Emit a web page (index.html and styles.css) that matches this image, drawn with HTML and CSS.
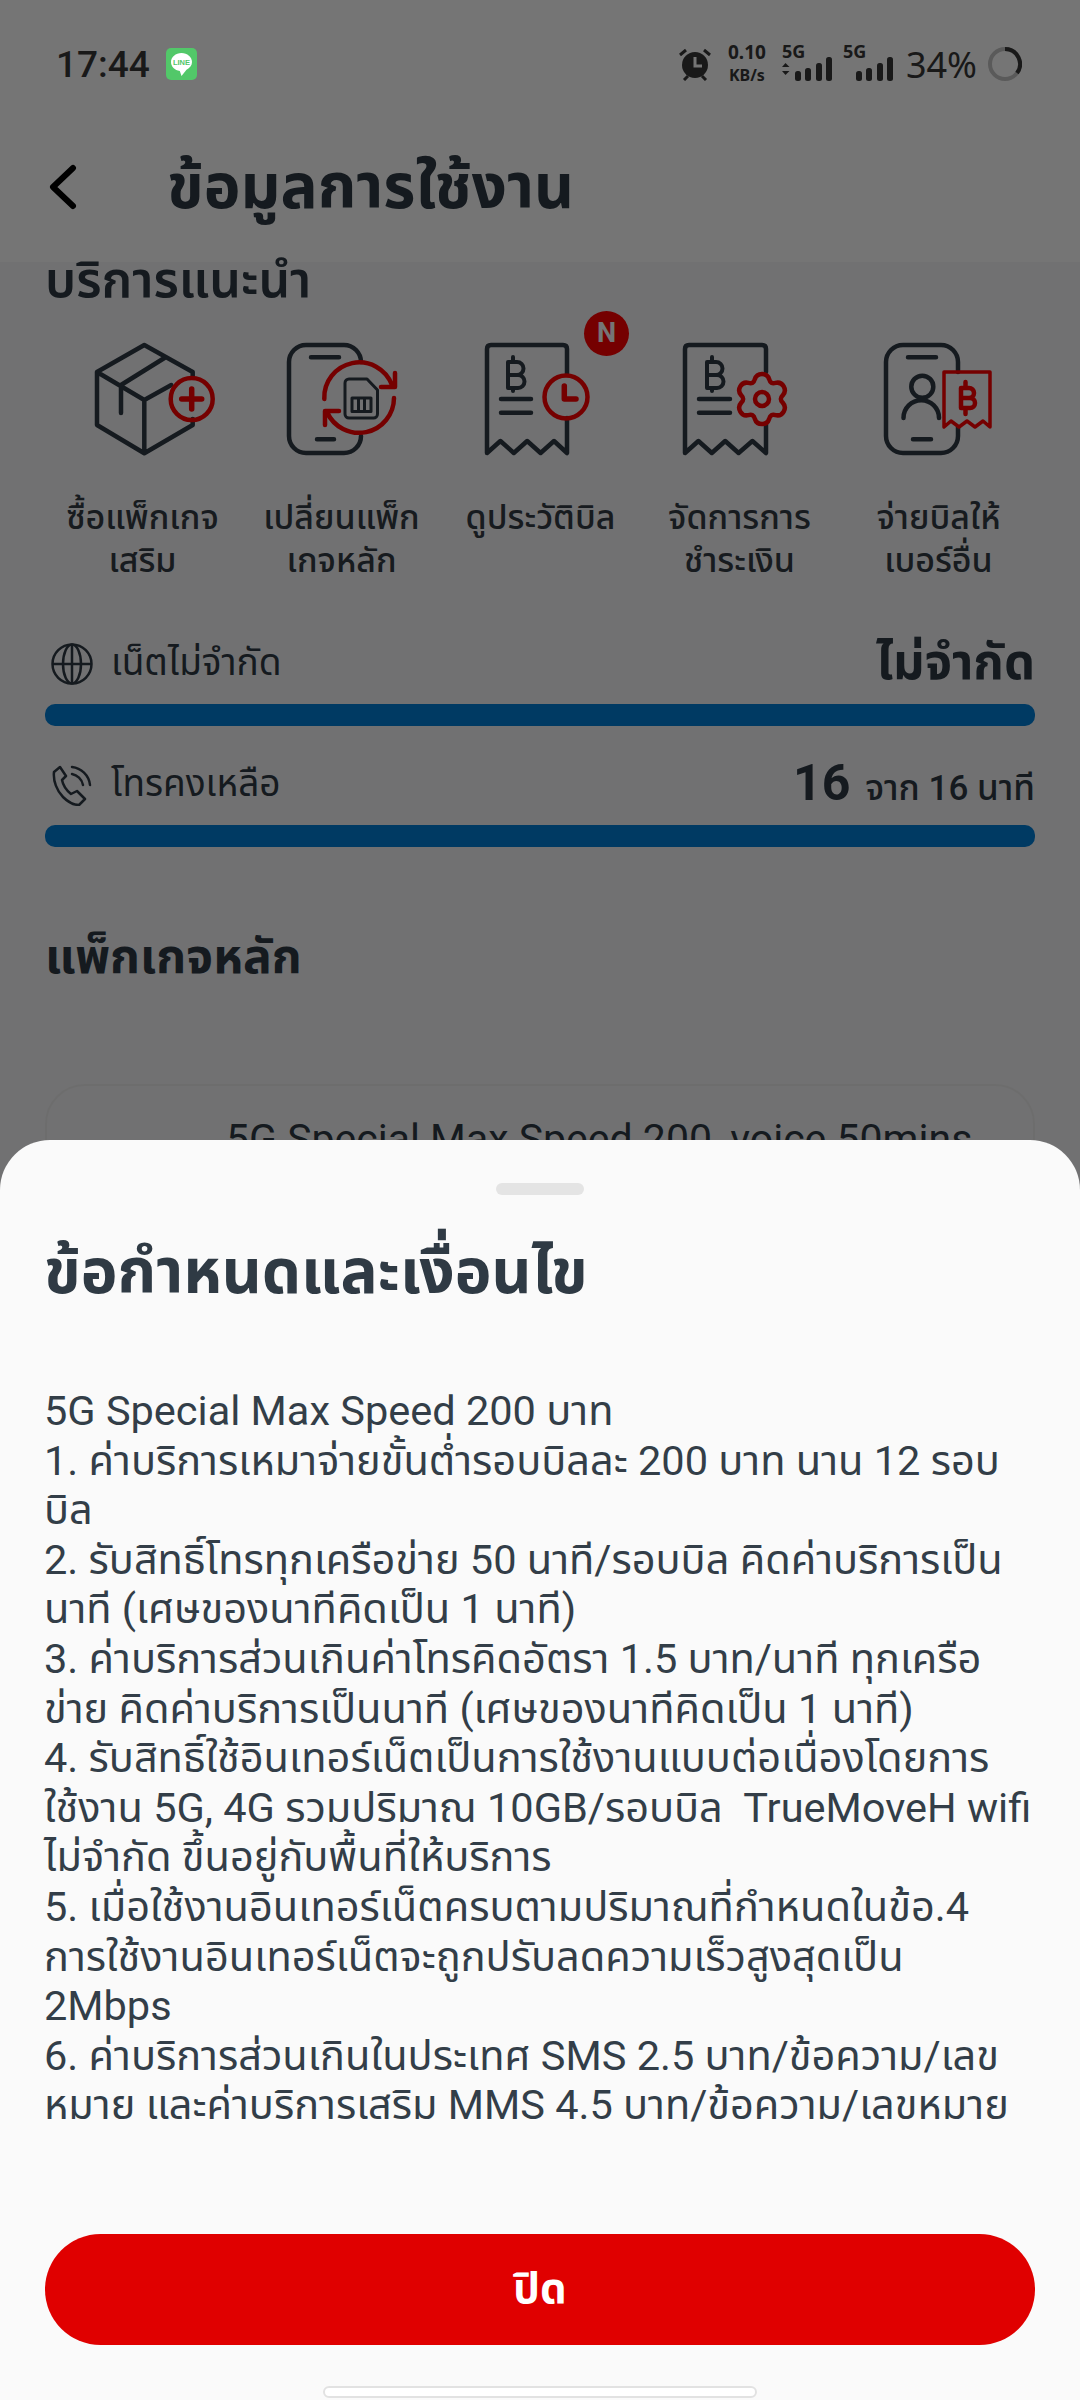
FILE: index.html
```html
<!DOCTYPE html>
<html lang="th">
<head>
<meta charset="UTF-8">
<meta name="viewport" content="width=device-width, initial-scale=1.0">
<title>ข้อมูลการใช้งาน</title>
<link rel="stylesheet" href="styles.css">
</head>
<body>

<div class="screen">
    <!-- status bar -->
    <div class="status">
        <span class="time">17:44</span>
        <svg class="line-app" viewBox="0 0 31 32">
            <rect width="31" height="32" rx="5" fill="#52c869"/>
            <path d="M15.500 5C9.700 5 5 9 5 14c0 4.600 3.800 8.300 8.800 8.900L15.500 28l5-6.300C23.800 20.200 26 17.300 26 14c0-5-4.700-9-10.500-9z" fill="#fff"/>
            <text class="line-word" x="15.500" y="17" text-anchor="middle">LINE</text>
        </svg>
        <div class="status-right">
            <svg class="alarm" viewBox="0 0 34 34">
                <circle cx="17" cy="18" r="13" fill="#383838"/>
                <path d="M2 8l6-5M32 8l-6-5M6 33l4-4M28 33l-4-4" stroke="#383838" stroke-width="3"/>
                <path d="M17 10v9h7" stroke="#fff" stroke-width="3" fill="none"/>
            </svg>
            <div class="speed"><b>0.10</b><span>KB/s</span></div>
            <div class="sim">
                <span class="sim-label">5G</span>
                <svg class="signal" viewBox="0 0 50 24">
                    <path d="M3.500 6l4 4H0zM3.500 18l4-4H0z" fill="#383838"/>
                    <rect x="13" y="14" width="6" height="10" rx="2.500" fill="#383838"/>
                    <rect x="23" y="11" width="6" height="13" rx="2.500" fill="#383838"/>
                    <rect x="34" y="6" width="6" height="18" rx="2.500" fill="#383838"/>
                    <rect x="44" y="0" width="6" height="24" rx="2.500" fill="#383838"/>
                </svg>
            </div>
            <div class="sim">
                <span class="sim-label">5G</span>
                <svg class="signal" viewBox="0 0 50 24">
                    <rect x="13" y="14" width="6" height="10" rx="2.500" fill="#383838"/>
                    <rect x="23" y="11" width="6" height="13" rx="2.500" fill="#383838"/>
                    <rect x="34" y="6" width="6" height="18" rx="2.500" fill="#383838"/>
                    <rect x="44" y="0" width="6" height="24" rx="2.500" fill="#383838"/>
                </svg>
            </div>
            <span class="battery">34%</span>
            <svg class="ring" viewBox="0 0 34 34">
                <circle cx="17" cy="17" r="15" fill="none" stroke="#c4c4c4" stroke-width="4"/>
                <path d="M17 2a15 15 0 0 1 12 24" fill="none" stroke="#383838" stroke-width="4"/>
            </svg>
        </div>
    </div>

    <!-- header -->
    <div class="topbar">
        <svg class="back" viewBox="0 0 30 46">
            <path d="M25 4L5 23l20 19" fill="none" stroke="#000" stroke-width="6" stroke-linecap="round" stroke-linejoin="round"/>
        </svg>
        <h1>ข้อมูลการใช้งาน</h1>
    </div>

    <div class="content">
        <h2 class="section-clip">บริการแนะนำ</h2>

        <div class="services">
            <div class="service">
                <svg class="service-icon" viewBox="0 0 120 120">
                    <g class="ink">
                        <path d="M109.700 36V32L61.300 5 14 32v53l47.300 28.300 48.400-28.300v-6M14 32l47.300 28 27-15M61.300 60v53M83 17L38 45v28"/>
                    </g>
                    <g class="accent">
                        <circle cx="108.700" cy="59" r="21"/>
                        <path class="thick" d="M98.700 59h20M108.700 49v20"/>
                    </g>
                </svg>
                <span>ซื้อแพ็กเกจ<br>เสริม</span>
            </div>
            <div class="service">
                <svg class="service-icon" viewBox="0 0 120 120">
                    <g class="ink">
                        <path d="M79 22A17 17 0 0 0 62 5H24A17 17 0 0 0 7 22v74a17 17 0 0 0 17 17h38a17 17 0 0 0 17-17M29 17.300h28M35 99.300h17"/>
                        <path class="thin" d="M63 43a4 4 0 0 1 4-4h18l10.500 11v24a4 4 0 0 1-4 4H67a4 4 0 0 1-4-4zM70 58h19v13.500H70zM76.500 58v13.500M82.500 58v13.500"/>
                    </g>
                    <g class="accent">
                        <path d="M42.300 59A35 35 0 0 1 110 45M113 33v14H99M112 58A35 35 0 0 1 45 72M43 85V71h14"/>
                    </g>
                </svg>
                <span>เปลี่ยนแพ็ก<br>เกจหลัก</span>
            </div>
            <div class="service">
                <svg class="service-icon" viewBox="0 0 120 120">
                    <g class="ink">
                        <path d="M86 34V9q0-4-4-4H10q-4 0-4 4v104l13.400-12 13.400 12 13.400-12 13.400 12L73 101l13 12V78M20 59h30M20 72.700h30"/>
                        <path class="baht" d="M27 22h9a6.500 6.500 0 0 1 0 13h-9zM27 35h10a6.500 6.500 0 0 1 0 13H27zM32 17v5M32 48v3"/>
                    </g>
                    <g class="accent">
                        <circle cx="85" cy="57" r="21.500"/>
                        <path class="thick" d="M83.300 46v13H95"/>
                    </g>
                </svg>
                <span>ดูประวัติบิล</span>
                <b class="badge">N</b>
            </div>
            <div class="service">
                <svg class="service-icon" viewBox="0 0 120 120">
                    <g class="ink">
                        <path d="M86 32V9q0-4-4-4H9q-4 0-4 4v104l13.400-12 13.400 12 13.400-12 13.400 12L72.400 101 86 113V84M19 59h31M19 72.700h31"/>
                        <path class="baht" d="M27 22h9a6.500 6.500 0 0 1 0 13h-9zM27 35h10a6.500 6.500 0 0 1 0 13H27zM32 17v5M32 48v3"/>
                    </g>
                    <g class="accent">
                        <path transform="translate(82 59)" d="M-7.180-19.730A7.500 7.500 0 0 1 7.180-19.730Q8.500-14.720 13.500-16.090A7.500 7.500 0 0 1 20.680-3.650Q17 0 20.680 3.650A7.500 7.500 0 0 1 13.500 16.090Q8.500 14.720 7.180 19.730A7.500 7.500 0 0 1-7.180 19.730Q-8.500 14.720-13.500 16.090A7.500 7.500 0 0 1-20.680 3.650Q-17 0-20.680-3.650A7.500 7.500 0 0 1-13.500-16.090Q-8.500-14.720-7.180-19.730z"/>
                        <circle cx="82" cy="59" r="7"/>
                    </g>
                </svg>
                <span>จัดการการ<br>ชำระเงิน</span>
            </div>
            <div class="service">
                <svg class="service-icon" viewBox="0 0 120 120">
                    <g class="ink">
                        <path d="M79 32V22A17 17 0 0 0 62 5H24A17 17 0 0 0 7 22v74a17 17 0 0 0 17 17h38a17 17 0 0 0 17-17v-9M29 17.300h28M34 99.300h18"/>
                        <circle cx="43.300" cy="46.700" r="11"/>
                        <path d="M24.500 78a17.700 17.700 0 0 1 35.500 0"/>
                    </g>
                    <g class="accent">
                        <path class="mid" d="M65 87V32h46v55l-7-6-8 6-8-6-8 6-8-6z"/>
                        <path d="M82 48h8a4.500 4.500 0 0 1 0 10h-8zM82 58h9a4.500 4.500 0 0 1 0 10h-9zM86.500 42v6M86.500 68v6"/>
                    </g>
                </svg>
                <span>จ่ายบิลให้<br>เบอร์อื่น</span>
            </div>
        </div>

        <div class="usage">
            <div class="usage-head">
                <svg class="usage-icon" viewBox="0 0 42 42">
                    <g fill="none" stroke="#2f3a44" stroke-width="2.500">
                        <circle cx="21" cy="21" r="19.500"/>
                        <ellipse cx="21" cy="21" rx="9" ry="19.500"/>
                        <path d="M1.500 21h39M21 1.500v39"/>
                    </g>
                </svg>
                <span class="usage-name">เน็ตไม่จำกัด</span>
                <b class="usage-big">ไม่จำกัด</b>
            </div>
            <div class="bar"></div>
        </div>

        <div class="usage">
            <div class="usage-head">
                <svg class="usage-icon" viewBox="0 0 42 42">
                    <g fill="none" stroke="#2f3a44" stroke-width="2.500" stroke-linecap="round" stroke-linejoin="round">
                        <path d="M9 3L3 8c-1 9 3 19 9 25 5 5 11 8 16 8l6-6-8-8-6 3c-5-4-8-9-9-14l4-4z"/>
                        <path d="M21 3c9 1 17 8 18 18M21 10c5 1 10 5 11 11"/>
                    </g>
                </svg>
                <span class="usage-name">โทรคงเหลือ</span>
                <span class="usage-count"><b>16</b> จาก 16 นาที</span>
            </div>
            <div class="bar"></div>
        </div>

        <h2 class="main-pack">แพ็กเกจหลัก</h2>

        <div class="pack-card">
            <i class="pack-dot"></i>
            <span>5G Special Max Speed 200, voice 50mins</span>
        </div>
    </div>

    <!-- dim layer -->
    <div class="scrim"></div>

    <!-- bottom sheet -->
    <div class="sheet">
        <div class="handle"></div>
        <h3>ข้อกำหนดและเงื่อนไข</h3>
        <p class="terms">5G Special Max Speed 200 บาท<br>
1. ค่าบริการเหมาจ่ายขั้นต่ำรอบบิลละ 200 บาท นาน 12 รอบ<br>
บิล<br>
2. รับสิทธิ์โทรทุกเครือข่าย 50 นาที/รอบบิล คิดค่าบริการเป็น<br>
นาที (เศษของนาทีคิดเป็น 1 นาที)<br>
3. ค่าบริการส่วนเกินค่าโทรคิดอัตรา 1.5 บาท/นาที ทุกเครือ<br>
ข่าย คิดค่าบริการเป็นนาที (เศษของนาทีคิดเป็น 1 นาที)<br>
4. รับสิทธิ์ใช้อินเทอร์เน็ตเป็นการใช้งานแบบต่อเนื่องโดยการ<br>
ใช้งาน 5G, 4G รวมปริมาณ 10GB/รอบบิล&nbsp; TrueMoveH wifi<br>
ไม่จำกัด ขึ้นอยู่กับพื้นที่ให้บริการ<br>
5. เมื่อใช้งานอินเทอร์เน็ตครบตามปริมาณที่กำหนดในข้อ.4<br>
การใช้งานอินเทอร์เน็ตจะถูกปรับลดความเร็วสูงสุดเป็น<br>
2Mbps<br>
6. ค่าบริการส่วนเกินในประเทศ SMS 2.5 บาท/ข้อความ/เลข<br>
หมาย และค่าบริการเสริม MMS 4.5 บาท/ข้อความ/เลขหมาย</p>
        <button class="close-btn">ปิด</button>
        <div class="home-bar"></div>
    </div>
</div>

</body>
</html>
```

FILE: styles.css
```css
* {
    box-sizing: border-box;
}

body {
    margin: 0;
    font-family: Roboto, "Noto Sans Thai", "Noto Sans", sans-serif;
    color: #2f3a44;
}

h1, h2, h3, p {
    margin: 0;
}

.screen {
    position: relative;
    width: 1080px;
    height: 2400px;
    overflow: hidden;
    background: #f6f6f9;
}

/* status bar */
.status {
    display: flex;
    align-items: center;
    height: 128px;
    padding: 0 58px 0 56px;
    background: #fff;
    color: #383838;
}

.time {
    font-family: Roboto, sans-serif;
    font-size: 37px;
    font-weight: 500;
}

/* app icons are not dimmed in the status bar */
.line-app {
    position: relative;
    z-index: 2;
    width: 31px;
    height: 32px;
    margin-left: 16px;
}

.line-word {
    font-family: "Liberation Sans", sans-serif;
    font-size: 7.500px;
    font-weight: 700;
    fill: #52c869;
}

.status-right {
    display: flex;
    align-items: center;
    margin-left: auto;
}

.alarm {
    width: 34px;
    height: 34px;
}

.speed {
    display: flex;
    flex-direction: column;
    align-items: center;
    margin-left: 16px;
    font-family: "Noto Sans", sans-serif;
    line-height: 23px;
}

.speed b {
    font-size: 19px;
}

.speed span {
    font-size: 16px;
    font-weight: 700;
}

.sim {
    position: relative;
    width: 50px;
    height: 34px;
    margin-left: 16px;
}

.sim + .sim {
    margin-left: 11px;
}

.sim-label {
    position: absolute;
    top: -8px;
    left: 0;
    font-family: "Noto Sans", sans-serif;
    font-size: 18px;
    font-weight: 700;
}

.signal {
    display: block;
    width: 50px;
    height: 24px;
    margin-top: 10px;
}

.battery {
    margin-left: 13px;
    font-family: "Noto Sans", sans-serif;
    font-size: 36px;
}

.ring {
    width: 34px;
    height: 34px;
    margin-left: 11px;
}

/* header */
.topbar {
    display: flex;
    align-items: center;
    height: 134px;
    padding: 0 0 17px 48px;
    background: #fff;
}

.back {
    width: 30px;
    height: 46px;
}

.topbar h1 {
    margin-left: 89px;
    font-size: 62px;
    font-weight: 700;
    line-height: 80px;
    color: #2f3a44;
}

.content {
    padding: 0 45px;
}

.section-clip {
    height: 41px;
    font-size: 50px;
    line-height: 36px;
    font-weight: 600;
}

/* service shortcuts */
.services {
    display: grid;
    grid-template-columns: repeat(5, 199px);
    margin: 37px 0 0 -2px;
}

.service {
    position: relative;
    display: flex;
    flex-direction: column;
    align-items: center;
    text-align: center;
    font-size: 34px;
    line-height: 43px;
    font-weight: 500;
    color: #333b44;
}

.service-icon {
    width: 120px;
    height: 120px;
    margin-bottom: 36px;
    overflow: visible;
}

.service-icon g {
    fill: none;
    stroke-width: 4.500;
    stroke-linecap: round;
    stroke-linejoin: round;
}

.ink {
    stroke: #2f3a44;
}

.accent {
    stroke: #ff0000;
}

.service-icon .thin {
    stroke-width: 3;
}

.service-icon .baht {
    stroke-width: 4;
}

.service-icon .mid {
    stroke-width: 3.500;
}

.service-icon .thick {
    stroke-width: 5.500;
}

.badge {
    position: absolute;
    top: -29px;
    left: 143px;
    width: 45px;
    height: 45px;
    border-radius: 50%;
    background: #ff0000;
    color: #fff;
    font-size: 27px;
    line-height: 45px;
}

/* usage rows */
.usage {
    margin-bottom: 31px;
}

.services + .usage {
    margin-top: 54px;
}

.usage-head {
    display: flex;
    align-items: center;
    height: 60px;
    padding-bottom: 4px;
}

.usage-icon {
    width: 42px;
    height: 42px;
    margin: 0 18px 0 6px;
}

.usage-name {
    font-size: 37px;
}

.usage-big {
    margin-left: auto;
    font-size: 49px;
    font-weight: 700;
}

.usage-count {
    margin-left: auto;
    font-size: 35px;
    font-weight: 500;
}

.usage-count b {
    margin-right: 6px;
    font-size: 50px;
}

.bar {
    height: 22px;
    margin-top: 8px;
    border-radius: 10px;
    background: #007ed7;
}

.main-pack {
    margin-top: 75px;
    font-size: 48px;
    font-weight: 700;
}

.pack-card {
    position: relative;
    display: flex;
    height: 200px;
    margin-top: 89px;
    padding: 29px 0 0 179px;
    border: 2px solid #eee;
    border-radius: 40px;
    background: #f6f6f9;
    font-size: 41px;
}

.pack-dot {
    position: absolute;
    top: 54px;
    left: 70px;
    width: 40px;
    height: 40px;
    border-radius: 50%;
    background: #2f3a44;
}

/* overlay */
.scrim {
    position: absolute;
    inset: 0;
    background: rgba(0, 0, 0, 0.54);
}

.sheet {
    position: absolute;
    left: 0;
    right: 0;
    bottom: 0;
    height: 1260px;
    display: flex;
    flex-direction: column;
    padding: 0 45px 0 44px;
    border-radius: 50px 50px 0 0;
    background: #fafafa;
}

.handle {
    align-self: center;
    flex: none;
    width: 88px;
    height: 12px;
    margin-top: 43px;
    border-radius: 6px;
    background: #e4e4e4;
}

.sheet h3 {
    margin-top: 42px;
    font-size: 62px;
    line-height: 70px;
    font-weight: 700;
    color: #2f3a44;
}

.terms {
    margin-top: 79px;
    font-size: 41.500px;
    line-height: 49.600px;
    white-space: nowrap;
    color: #333e48;
}

.close-btn {
    flex: none;
    height: 111px;
    margin: auto 0 0 1px;
    border: none;
    border-radius: 56px;
    background: #e00000;
    color: #fff;
    font-family: inherit;
    font-size: 42px;
    font-weight: 700;
}

.home-bar {
    align-self: center;
    flex: none;
    width: 434px;
    height: 12px;
    margin: 41px 0 2px;
    border: 2px solid #e2e2e2;
    border-radius: 6px;
    background: #fff;
}
```
